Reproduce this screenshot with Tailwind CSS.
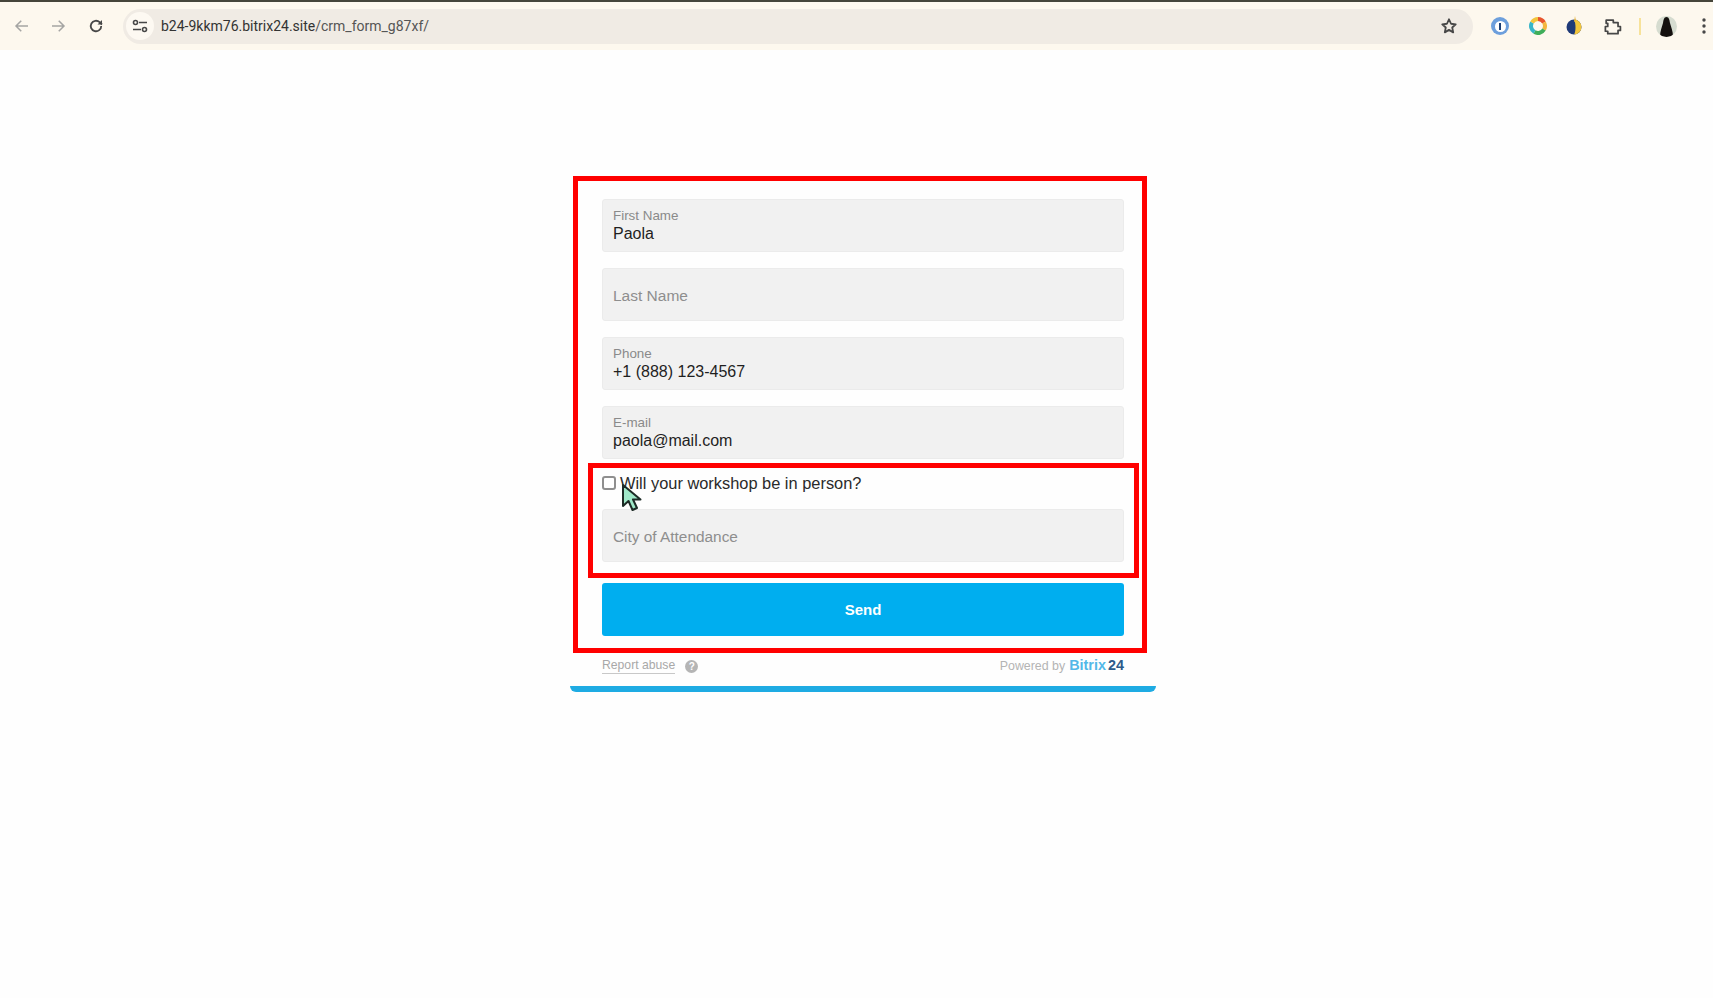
<!DOCTYPE html>
<html lang="en">
<head>
    <meta charset="UTF-8">
    <meta name="viewport" content="width=device-width, initial-scale=1.0">
    <title>CRM Form</title>
    <script src="https://cdn.jsdelivr.net/npm/@tailwindcss/browser@4"></script>
</head>
<body class="bg-[#fefefe] h-[998px] overflow-hidden font-['Liberation_Sans',Arial,sans-serif]">

    <!-- Browser toolbar -->
    <header class="h-[50px] bg-[#fdf8ee] border-t-2 border-[#45453a] flex items-center">
        <div class="w-[122px] flex items-center shrink-0">
            <svg class="ml-[13px] w-[18px] h-[18px]" viewBox="0 0 24 24" fill="none" stroke="#a5a5a3" stroke-width="2"><path d="M20 12H5M11 5l-7 7 7 7"/></svg>
            <svg class="ml-[18px] w-[18px] h-[18px]" viewBox="0 0 24 24" fill="none" stroke="#a5a5a3" stroke-width="2"><path d="M4 12h15M13 5l7 7-7 7"/></svg>
            <svg class="ml-[20px] w-[18px] h-[18px]" viewBox="0 0 24 24" fill="none" stroke="#474747" stroke-width="2.4"><path d="M19 12a7 7 0 1 1-2.2-5.1L20 10"/><path d="M20 4v6h-6" fill="#474747" stroke="none"/></svg>
        </div>

        <div class="w-[1350px] h-[35px] ml-[1px] bg-[#f0ebe4] rounded-full flex items-center shrink-0 pr-[15px]">
            <div class="w-[28px] h-[28px] ml-[3px] rounded-full bg-[#fdf9f2] flex items-center justify-center shrink-0">
                <svg class="w-[16px] h-[16px]" viewBox="0 0 16 16" fill="none" stroke="#474747" stroke-width="1.6"><path d="M7 4.500H15M1 11.500H9"/><circle cx="3.500" cy="4.500" r="2"/><circle cx="12.500" cy="11.500" r="2"/></svg>
            </div>
            <div class="ml-[7px] text-[14px] text-[#555] font-['Roboto',sans-serif] whitespace-nowrap"><span class="text-[#333]">b24-9kkm76.bitrix24.site</span>/crm_form_g87xf/</div>
            <svg class="ml-auto w-[18px] h-[18px]" viewBox="0 0 24 24" fill="none" stroke="#474747" stroke-width="2.4" stroke-linejoin="round"><path d="M12 3l2.700 6 6.300.7-4.700 4.300 1.300 6.500-5.600-3.300-5.600 3.300 1.300-6.500L3 9.700l6.300-.7z"/></svg>
        </div>

        <div class="flex items-center shrink-0">
            <div class="ml-[18px] w-[18px] h-[18px] rounded-full bg-[#6d9fdc] flex items-center justify-center">
                <div class="w-[11px] h-[11px] rounded-full bg-white flex items-center justify-center"><div class="w-[2px] h-[7px] bg-[#1c3f75]"></div></div>
            </div>
            <svg class="ml-[20px] w-[18px] h-[18px]" viewBox="0 0 18 18" fill="none" stroke-width="4"><path d="M9 2a7 7 0 0 1 6 3.500" stroke="#e8552d"/><path d="M15 5.500a7 7 0 0 1 0 7" stroke="#f4b63f"/><path d="M15 12.500a7 7 0 0 1-9.500 2.600" stroke="#3fae5a"/><path d="M5.500 15.100A7 7 0 0 1 3 5.500" stroke="#37b5c8"/><path d="M3 5.500A7 7 0 0 1 9 2" stroke="#f2c53d"/></svg>
            <svg class="ml-[19px] w-[16px] h-[20px]" viewBox="0 0 16 20"><circle cx="8" cy="11" r="7.500" fill="#1f3a78"/><path d="M8 3.500a7.500 7.500 0 0 1 0 15c2-3 2-11 0-15z" fill="#f2c53d"/><path d="M9 0l1 5-2 1z" fill="#e8b33a"/></svg>
            <svg class="ml-[21px] w-[19px] h-[19px]" viewBox="0 0 24 24" fill="none" stroke="#474747" stroke-width="2.200" stroke-linejoin="round"><path d="M4 4h9v3h6v5h3v5h-3v4H6v-3H3v-6h3V8H4z"/></svg>
            <div class="ml-[17px] w-[2px] h-[17px] bg-[#f7e29a]"></div>
            <div class="ml-[15px] w-[21px] h-[21px] rounded-full bg-[#d6dcd0] overflow-hidden flex items-end justify-center">
                <svg class="w-[13px] h-[20px]" viewBox="0 0 13 20"><path d="M6.500 0c2.500 0 3 3 3.500 6 1 4 3 8 3 14H0c0-6 2-10 3-14 .5-3 1-6 3.500-6z" fill="#14100e"/></svg>
            </div>
            <svg class="ml-[25px] w-[4px] h-[16px]" viewBox="0 0 4 16" fill="#474747"><circle cx="2" cy="2" r="1.700"/><circle cx="2" cy="8" r="1.700"/><circle cx="2" cy="14" r="1.700"/></svg>
        </div>
    </header>

    <!-- Form -->
    <main class="pl-[570px] pt-[149px]">
        <div class="relative w-[586px] px-[32px]">

            <div class="flex flex-col gap-[16px]">
                <div class="h-[53px] bg-[#f1f1f1] rounded-[3px] border border-[#ebebeb] px-[10px] pt-[8px]">
                    <div class="text-[13.4px] leading-[15px] text-[#8a8a8a]">First Name</div>
                    <div class="mt-[1px] text-[16px] leading-[19px] text-[#1f1f1f]">Paola</div>
                </div>
                <div class="h-[53px] bg-[#f1f1f1] rounded-[3px] border border-[#ebebeb] px-[10px] pt-[2px] flex items-center">
                    <div class="text-[15.5px] text-[#8e8e8e]">Last Name</div>
                </div>
                <div class="h-[53px] bg-[#f1f1f1] rounded-[3px] border border-[#ebebeb] px-[10px] pt-[8px]">
                    <div class="text-[13.4px] leading-[15px] text-[#8a8a8a]">Phone</div>
                    <div class="mt-[1px] text-[16px] leading-[19px] text-[#1f1f1f]">+1 (888) 123-4567</div>
                </div>
                <div class="h-[53px] bg-[#f1f1f1] rounded-[3px] border border-[#ebebeb] px-[10px] pt-[8px]">
                    <div class="text-[13.4px] leading-[15px] text-[#8a8a8a]">E-mail</div>
                    <div class="mt-[1px] text-[16px] leading-[19px] text-[#1f1f1f]">paola@mail.com</div>
                </div>
            </div>

            <div class="mt-[14px] h-[20px] flex items-center">
                <div class="w-[14px] h-[14px] rounded-[3px] border-2 border-[#8f8f8f] bg-white shrink-0"></div>
                <div class="ml-[4px] text-[16.4px] text-[#2a2a2a] whitespace-nowrap">Will your workshop be in person?</div>
            </div>

            <div class="mt-[16px] h-[53px] bg-[#f1f1f1] rounded-[3px] border border-[#ebebeb] px-[10px] pt-[2px] flex items-center">
                <div class="text-[15.4px] text-[#8e8e8e]">City of Attendance</div>
            </div>

            <button class="mt-[21px] block w-full h-[53px] pt-[2px] bg-[#00aeef] rounded-[3px] text-white text-[15px] font-bold">Send</button>

            <div class="mt-[20px] h-[20px] flex items-center text-[#a8a8a8]">
                <span class="text-[12.2px] border-b border-[#c8c8c8] leading-[15px]">Report abuse</span>
                <span class="ml-[10px] w-[13px] h-[13px] rounded-full bg-[#b5b5b5] text-white text-[10px] font-bold flex items-center justify-center">?</span>
                <span class="ml-auto text-[12.4px] text-[#b4b4b4]">Powered by</span>
                <span class="ml-[4px] text-[14.4px] font-bold text-[#52b8e8]">Bitrix</span>
                <span class="ml-[2px] text-[14.400px] font-bold text-[#2d5a8a]">24</span>
            </div>

            <div class="mt-[10px] -mx-[32px] h-[6px] bg-[#1eabe3] rounded-b-[10px]"></div>

            <!-- Red highlight boxes over the form -->
            <div class="absolute left-[3px] top-[-23px] w-[574px] h-[477px] border-[5px] border-[#ff0000] pointer-events-none"></div>
            <div class="absolute left-[18px] top-[264px] w-[551px] h-[115px] border-[5px] border-[#ff0000] pointer-events-none"></div>

            <!-- Mouse cursor -->
            <svg class="absolute left-[51px] top-[284px] w-[22px] h-[30px]" viewBox="0 0 22 30"><path d="M2 2v21l5.500-5 4 9 4.500-2-4-8.500h7.500z" fill="#9fe8c8" stroke="#1d2b26" stroke-width="2" stroke-linejoin="round"/></svg>
        </div>
    </main>
</body>
</html>
